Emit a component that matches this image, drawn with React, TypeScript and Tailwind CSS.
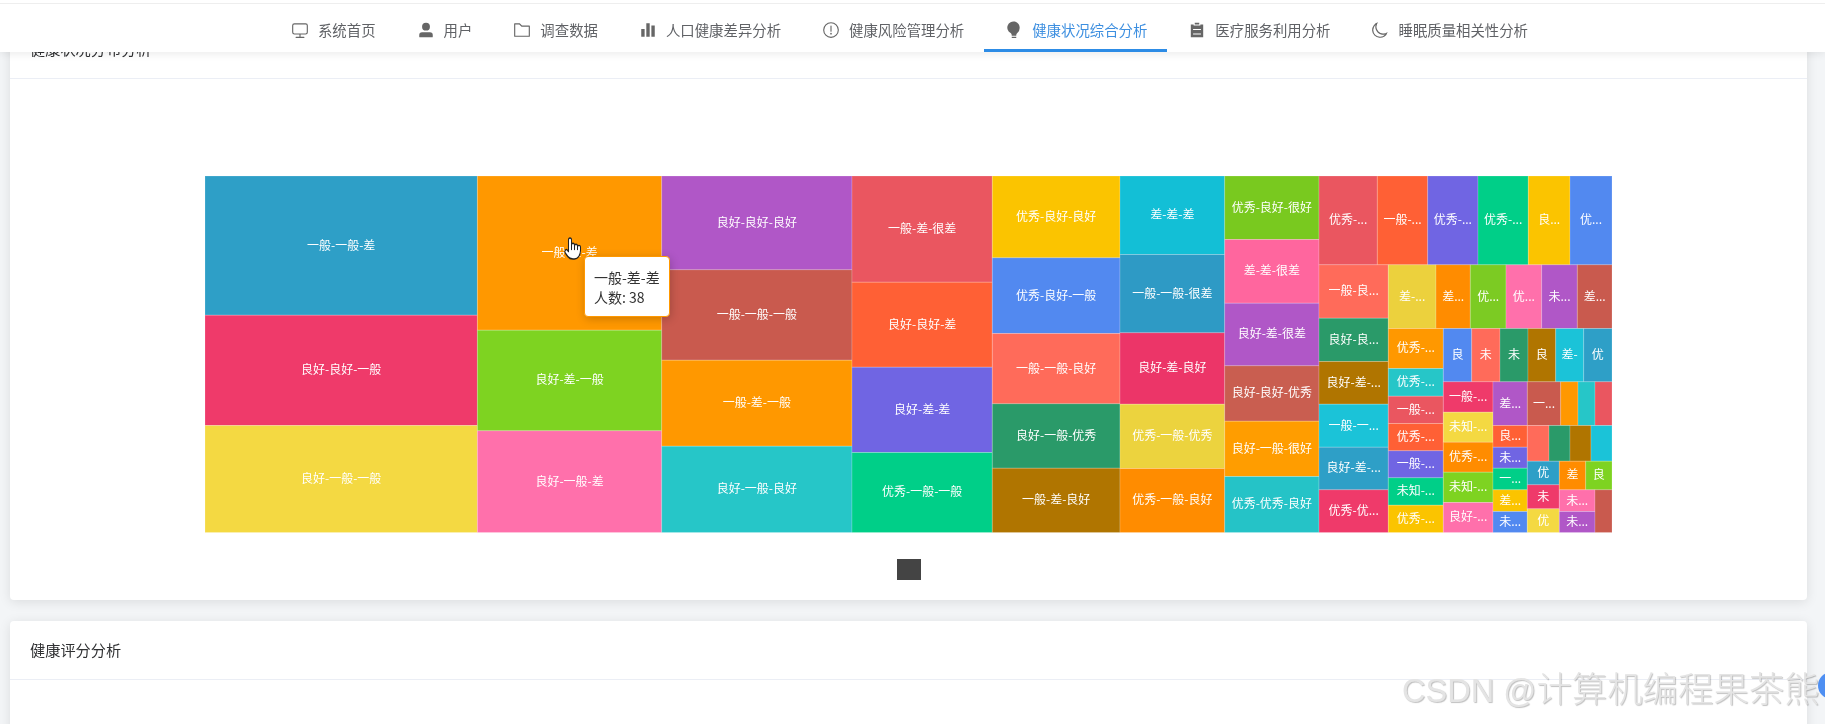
import React from "react";

type Cell = [number, number, number, number, string, string];

const blue = "#2e9fc7", rose = "#ef3a6a", sun = "#f4d942", amber = "#ff9800", lime = "#7ed321", pink = "#ff70ab",
  purple = "#b057c7", brick = "#c95a4e", teal = "#26c6c8", red = "#ea5660", flame = "#ff6035", violet = "#7065e3",
  mint = "#00cf88", gold = "#fbc400", sky = "#5289f0", coral = "#ff6b5a", forest = "#2a9a69", bronze = "#b07500",
  cyan = "#13bfd6", orange = "#ff8c00", T = 175.5, B = 532;

const cells: Cell[] = [
  [205, T, 477.4, 314.7, blue, "一般-一般-差"],
  [205, 314.7, 477.4, 425, rose, "良好-良好-一般"],
  [205, 425, 477.4, B, sun, "良好-一般-一般"],
  [477.4, T, 661.7, 329.7, amber, "一般-差-差"],
  [477.4, 329.7, 661.7, 430.3, lime, "良好-差-一般"],
  [477.4, 430.3, 661.7, B, pink, "良好-一般-差"],
  [661.7, T, 852, 269.3, purple, "良好-良好-良好"],
  [661.7, 269.3, 852, 359.7, brick, "一般-一般-一般"],
  [661.7, 359.7, 852, 445.7, amber, "一般-差-一般"],
  [661.7, 445.7, 852, B, teal, "良好-一般-良好"],
  [852, T, 992.3, 281.7, red, "一般-差-很差"],
  [852, 281.7, 992.3, 366.7, flame, "良好-良好-差"],
  [852, 366.7, 992.3, 452, violet, "良好-差-差"],
  [852, 452, 992.3, B, mint, "优秀-一般-一般"],
  [992.3, T, 1120, 257.3, gold, "优秀-良好-良好"],
  [992.3, 257.3, 1120, 333, sky, "优秀-良好-一般"],
  [992.3, 333, 1120, 403.3, coral, "一般-一般-良好"],
  [992.3, 403.3, 1120, 467.7, forest, "良好-一般-优秀"],
  [992.3, 467.7, 1120, B, bronze, "一般-差-良好"],
  [1120, T, 1224.7, 254, cyan, "差-差-差"],
  [1120, 254, 1224.7, 332.3, "#2e9ac5", "一般-一般-很差"],
  [1120, 332.3, 1224.7, 403.7, "#ec3568", "良好-差-良好"],
  [1120, 403.7, 1224.7, 468, "#ecd33e", "优秀-一般-优秀"],
  [1120, 468, 1224.7, B, orange, "优秀-一般-良好"],
  [1224.7, T, 1319, 239, "#79c91f", "优秀-良好-很好"],
  [1224.7, 239, 1319, 302.7, "#ff669e", "差-差-很差"],
  [1224.7, 302.7, 1319, 365.3, purple, "良好-差-很差"],
  [1224.7, 365.3, 1319, 420.7, "#c95e50", "良好-良好-优秀"],
  [1224.7, 420.7, 1319, 476, "#ff9d00", "良好-一般-很好"],
  [1224.7, 476, 1319, B, "#25c3c7", "优秀-优秀-良好"],
  [1319, T, 1377.3, 264.3, red, "优秀-..."],
  [1377.3, T, 1427.7, 264.3, flame, "一般-..."],
  [1427.7, T, 1478, 264.3, violet, "优秀-..."],
  [1478, T, 1528.3, 264.3, mint, "优秀-..."],
  [1528.3, T, 1570, 264.3, gold, "良..."],
  [1570, T, 1612, 264.3, sky, "优..."],
  [1319, 264.3, 1388.3, 317.7, coral, "一般-良..."],
  [1319, 317.7, 1388.3, 361, forest, "良好-良..."],
  [1319, 361, 1388.3, 403.7, bronze, "良好-差-..."],
  [1319, 403.7, 1388.3, 446.7, "#1bc3d8", "一般-一..."],
  [1319, 446.7, 1388.3, 489.3, blue, "良好-差-..."],
  [1319, 489.3, 1388.3, B, rose, "优秀-优..."],
  [1388.3, 264.3, 1436, 328, "#ecd13d", "差-..."],
  [1436, 264.3, 1470.3, 328, orange, "差..."],
  [1470.3, 264.3, 1506, 328, "#7ccb23", "优..."],
  [1506, 264.3, 1541.7, 328, pink, "优..."],
  [1541.7, 264.3, 1577.3, 328, purple, "未..."],
  [1577.3, 264.3, 1612, 328, brick, "差..."],
  [1388.3, 328, 1443.3, 368, amber, "优秀-..."],
  [1388.3, 368, 1443.3, 395.7, teal, "优秀-..."],
  [1388.3, 395.7, 1443.3, 423, red, "一般-..."],
  [1388.3, 423, 1443.3, 450.3, flame, "优秀-..."],
  [1388.3, 450.3, 1443.3, 477.3, violet, "一般-..."],
  [1388.3, 477.3, 1443.3, 504.7, mint, "未知-..."],
  [1388.3, 504.7, 1443.3, B, gold, "优秀-..."],
  [1443.3, 328, 1471.7, 381.3, sky, "良"],
  [1471.7, 328, 1500, 381.3, coral, "未"],
  [1500, 328, 1528, 381.3, forest, "未"],
  [1528, 328, 1555.7, 381.3, bronze, "良"],
  [1555.7, 328, 1583.7, 381.3, "#1bc3d8", "差-"],
  [1583.7, 328, 1612, 381.3, blue, "优"],
  [1443.3, 381.3, 1493, 411.7, rose, "一般-..."],
  [1443.3, 411.7, 1493, 441.7, sun, "未知-..."],
  [1443.3, 441.7, 1493, 471.7, orange, "优秀-..."],
  [1443.3, 471.7, 1493, 502, lime, "未知-..."],
  [1443.3, 502, 1493, B, pink, "良好-..."],
  [1493, 381.3, 1527.3, 425, purple, "差..."],
  [1493, 425, 1527.3, 446.7, flame, "良..."],
  [1493, 446.7, 1527.3, 467.7, violet, "未..."],
  [1493, 467.7, 1527.3, 489.3, mint, "一..."],
  [1493, 489.3, 1527.3, 511, gold, "差..."],
  [1493, 511, 1527.3, B, sky, "未..."],
  [1527.3, 381.3, 1560.7, 425, brick, "一..."],
  [1560.7, 381.3, 1578, 425, amber, ""],
  [1578, 381.3, 1595, 425, teal, ""],
  [1595, 381.3, 1612, 425, red, ""],
  [1527.3, 425, 1549, 460.7, coral, ""],
  [1549, 425, 1570, 460.7, forest, ""],
  [1570, 425, 1591, 460.7, bronze, ""],
  [1591, 425, 1612, 460.7, "#1bc3d8", ""],
  [1527.3, 460.7, 1559.3, 484.3, blue, "优"],
  [1527.3, 484.3, 1559.3, 508.3, rose, "未"],
  [1527.3, 508.3, 1559.3, B, sun, "优"],
  [1559.3, 460.7, 1585.7, 489.3, orange, "差"],
  [1585.7, 460.7, 1612, 489.3, lime, "良"],
  [1559.3, 489.3, 1595, 511, pink, "未..."],
  [1559.3, 511, 1595, B, purple, "未..."],
  [1595, 489.3, 1612, B, brick, ""],
];

const P = (d: string) => (
  <svg viewBox="0 0 1024 1024" className="w-[18px] h-[18px] shrink-0 text-[#666]" fill="currentColor">
    <path d={d} />
  </svg>
);

const nav: [string, string, boolean?][] = [
  ["系统首页", "M544 768v128h192a32 32 0 1 1 0 64H288a32 32 0 1 1 0-64h192V768H192A128 128 0 0 1 64 640V256a128 128 0 0 1 128-128h640a128 128 0 0 1 128 128v384a128 128 0 0 1-128 128H544zM192 192a64 64 0 0 0-64 64v384a64 64 0 0 0 64 64h640a64 64 0 0 0 64-64V256a64 64 0 0 0-64-64H192z"],
  ["用户", "M288 320a224 224 0 1 0 448 0 224 224 0 1 0-448 0m544 608H160a32 32 0 0 1-32-32v-96a160 160 0 0 1 160-160h448a160 160 0 0 1 160 160v96a32 32 0 0 1-32 32z"],
  ["调查数据", "M128 192v640h768V320H485.76L357.504 192H128zm-32-64h287.872l128.384 128H928a32 32 0 0 1 32 32v576a32 32 0 0 1-32 32H96a32 32 0 0 1-32-32V160a32 32 0 0 1 32-32z"],
  ["人口健康差异分析", "M416 896V128h192v768H416zm-288 0V448h192v448H128zm576 0V256h192v640H704z"],
  ["健康风险管理分析", "M512 64a448 448 0 1 1 0 896 448 448 0 0 1 0-896zm0 832a384 384 0 0 0 0-768 384 384 0 0 0 0 768zm48-176a48 48 0 1 1-96 0 48 48 0 0 1 96 0zm-48-464a32 32 0 0 1 32 32v288a32 32 0 0 1-64 0V288a32 32 0 0 1 32-32z"],
  ["健康状况综合分析", "M384 960v-64h256v64H384zm448-544a350.656 350.656 0 0 1-128.32 271.424C665.344 719.04 640 763.52 640 832H384c0-68.48-25.344-112.96-63.68-144.576A352 352 0 1 1 832 416z", true],
  ["医疗服务利用分析", "M704 192h160v736H160V192h160v64h384v-64zM288 512h448v-64H288v64zm0 256h448v-64H288v64zm96-576V96h256v96H384z"],
  ["睡眠质量相关性分析", "M240.448 240.448a384 384 0 1 0 559.424 525.696 448 448 0 0 1-542.016-542.08 390.592 390.592 0 0 0-17.408 16.384zm181.056 362.048a384 384 0 0 0 525.632 16.384A448 448 0 1 1 405.056 76.8a384 384 0 0 0 16.448 525.696z"],
];

export default function App() {
  return (
    <div className="relative h-[724px] overflow-hidden bg-[#f3f5f7] blur-[0.35px] font-['Noto_Sans_CJK_SC','Noto_Sans',sans-serif]">
      <main className="pt-5 pl-[10px] pr-[18px] flex flex-col gap-[21px]">
        <section className="bg-white rounded shadow-[0_2px_12px_rgba(0,0,0,0.1)]">
          <header className="h-[59px] px-5 pb-[2px] flex items-center border-b border-[#ebeef5] text-[15.2px] text-[#303133]">
            健康状况分布分析
          </header>
          <div className="pt-[96.5px] pb-5 flex flex-col items-center">
            <div className="relative w-[1407px] h-[357px]">
              <svg viewBox="205 175.5 1407 357" className="block w-[1407px] h-[357px]">
                {cells.map(([x1, y1, x2, y2, c, t], i) => (
                  <g key={i}>
                    <rect x={x1} y={y1} width={x2 - x1} height={y2 - y1} fill={c} stroke="#ffffff" strokeOpacity={0.18} strokeWidth={1} />
                    {t && (
                      <text x={(x1 + x2) / 2} y={(y1 + y2) / 2 - 1.6} fill="#ffffff" fontSize={12} textAnchor="middle" dominantBaseline="central">
                        {t}
                      </text>
                    )}
                  </g>
                ))}
              </svg>
              <div className="absolute left-[379px] top-[80px] w-[86px] h-[61px] bg-white border border-[#ff9800] rounded px-[9px] pt-[10px] text-[14px] leading-[20px] text-[#333] shadow-[1px_2px_10px_rgba(0,0,0,0.2)]">
                <div className="whitespace-nowrap">一般-差-差</div>
                <div className="whitespace-nowrap">人数: 38</div>
              </div>
              <svg viewBox="0 0 24 24" className="absolute left-[359px] top-[60px] w-[18px] h-[25px]" fill="#ffffff" stroke="#222222" strokeWidth={1.4} strokeLinejoin="round" strokeLinecap="round" preserveAspectRatio="none">
                <path d="M8 2a2 2 0 0 0-2 2v11l-1.6-1.6a2 2 0 0 0-2.8 2.8l3.6 3.6C6.7 21.3 8.8 22 12 22h2a8 8 0 0 0 8-8v-3a2 2 0 0 0-4 0v-1a2 2 0 0 0-4 0V9a2 2 0 0 0-4 0V4a2 2 0 0 0-2-2z" />
                <path d="M10 9v4M14 9.5v3.5M18 11v2" fill="none" />
              </svg>
            </div>
            <div className="mt-[26.5px] w-6 h-[21px] bg-[#444]" />
          </div>
        </section>

        <section className="bg-white rounded shadow-[0_2px_12px_rgba(0,0,0,0.1)] h-[300px]">
          <header className="h-[59px] px-5 pb-[2px] flex items-center border-b border-[#ebeef5] text-[15.2px] text-[#303133]">
            健康评分分析
          </header>
        </section>
      </main>

      <nav className="absolute top-0 inset-x-0 pt-[3px] bg-white shadow-[0_2px_8px_rgba(0,0,0,0.08)]">
        <div className="border-t border-[#eeeeee] pt-[5px] pr-[7px] flex justify-center">
          {nav.map(([label, d, active]) => (
            <div
              key={label}
              className={
                "h-[43px] pt-[1px] pl-[21px] pr-5 flex items-center gap-[9px] border-b-[3px] text-[14.4px] whitespace-nowrap " +
                (active ? "border-[#2d8ce6] text-[#3d8fe0]" : "border-transparent text-[#606266]")
              }
            >
              {P(d)}
              <span>{label}</span>
            </div>
          ))}
        </div>
      </nav>

      <div className="absolute left-[1402px] top-[665px] whitespace-nowrap text-[35.4px] leading-[44px] font-light text-[#e4e4e4] [text-shadow:1px_1px_1px_rgba(0,0,0,0.25)] pointer-events-none">
        <span className="font-['Liberation_Sans',sans-serif] text-[32.6px]">CSDN @</span>
        <span>计算机编程果茶熊</span>
      </div>
      <div className="absolute left-[1818px] top-[672px] w-[27px] h-[27px] rounded-full bg-[#4e8ff2]" />
    </div>
  );
}
